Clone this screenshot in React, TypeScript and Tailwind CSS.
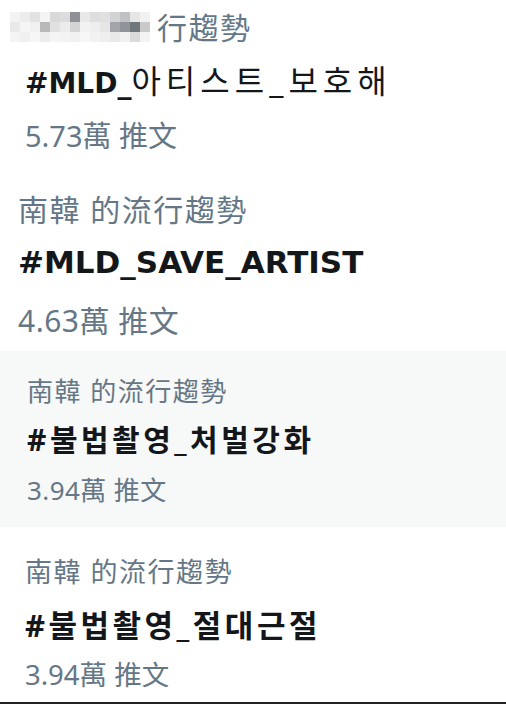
const mosaic: string[][] = [
  ["#f3f3f3", "#ececec", "#e2e2e2", "#f4f4f4", "#d9d9d9", "#dcdcdc", "#8e9296", "#e8e8e8", "#dedede", "#e0e0e0", "#d2d2d2", "#bfc2c4", "#e6e6e6", "#f1f1f1"],
  ["#e9e9e9", "#f5f5f5", "#f0f0f0", "#b9b9b9", "#e0e0e0", "#ececec", "#d4d4d4", "#f2f2f2", "#eeeeee", "#e6e6e6", "#a2a6aa", "#8f9499", "#6f767c", "#c9c9c9"],
  ["#f4f4f4", "#f0f0f0", "#f6f6f6", "#ededed", "#f5f5f5", "#f3f3f3", "#f0f0f0", "#f7f7f7", "#f2f2f2", "#eeeeee", "#e9e9e9", "#f0f0f0", "#dadada", "#f3f3f3"],
];

function Mosaic() {
  return (
    <div className="grid grid-cols-[repeat(14,10px)] grid-rows-[repeat(3,10px)] mr-[7px]">
      {mosaic.flat().map((c, i) => (
        <div key={i} style={{ backgroundColor: c }} />
      ))}
    </div>
  );
}

const font = "font-['Noto_Sans','Noto_Sans_CJK_TC','Noto_Sans_CJK_KR',sans-serif]";
const wide = "font-['DejaVu_Sans','Noto_Sans_CJK_KR',sans-serif]";

export default function App() {
  return (
    <div className={`w-[506px] h-[704px] bg-white border-b-2 border-[#222] flex flex-col ${font}`}>
      {/* first trend, location blurred */}
      <div className="pl-[10px] pt-[9px]">
        <div className="h-[36px] flex items-center text-[30px] tracking-[1.5px] text-[#657786]">
          <Mosaic />
          <span>行趨勢</span>
        </div>
        <div className="pl-[15px] mt-[18px] h-[36px] leading-[36px] font-bold text-[#14171a] whitespace-nowrap">
          <span className={`${wide} text-[28px]`}>#MLD_</span>
          <span className={`${font} font-normal text-[32px] tracking-[5px]`}>아티스트_보호해</span>
        </div>
        <div className="pl-[15px] mt-[19px] h-[36px] leading-[36px] text-[29px] text-[#657786]">5.73萬 推文</div>
      </div>

      <div className="pl-[18px] pt-[38px] pb-[12px]">
        <div className="h-[36px] leading-[36px] text-[30px] tracking-[1.5px] text-[#657786]">南韓 的流行趨勢</div>
        <div className={`mt-[16px] h-[36px] leading-[36px] text-[31px] font-bold text-[#14171a] whitespace-nowrap ${wide}`}>#MLD_SAVE_ARTIST</div>
        <div className="mt-[23px] h-[36px] leading-[36px] text-[30px] tracking-[0.5px] text-[#657786]">4.63萬 推文</div>
      </div>

      <div className="pl-[27px] pt-[22px] pb-[19px] bg-[#f7f8f8]">
        <div className="h-[36px] leading-[36px] text-[26px] tracking-[1.5px] text-[#657786]">南韓 的流行趨勢</div>
        <div className="mt-[13px] h-[36px] leading-[36px] text-[30px] font-bold text-[#14171a] tracking-[3.5px] whitespace-nowrap">#불법촬영_처벌강화</div>
        <div className="mt-[14px] h-[36px] leading-[36px] text-[26px] tracking-[0.4px] text-[#657786]">3.94萬 推文</div>
      </div>

      <div className="pl-[25px] pt-[27px] pb-[9px]">
        <div className="h-[36px] leading-[36px] text-[27px] tracking-[1.5px] text-[#657786]">南韓 的流行趨勢</div>
        <div className="mt-[17px] h-[36px] leading-[36px] text-[31px] font-bold text-[#14171a] tracking-[3.5px] whitespace-nowrap">#불법촬영_절대근절</div>
        <div className="mt-[14px] h-[36px] leading-[36px] text-[27.5px] text-[#657786]">3.94萬 推文</div>
      </div>
    </div>
  );
}
